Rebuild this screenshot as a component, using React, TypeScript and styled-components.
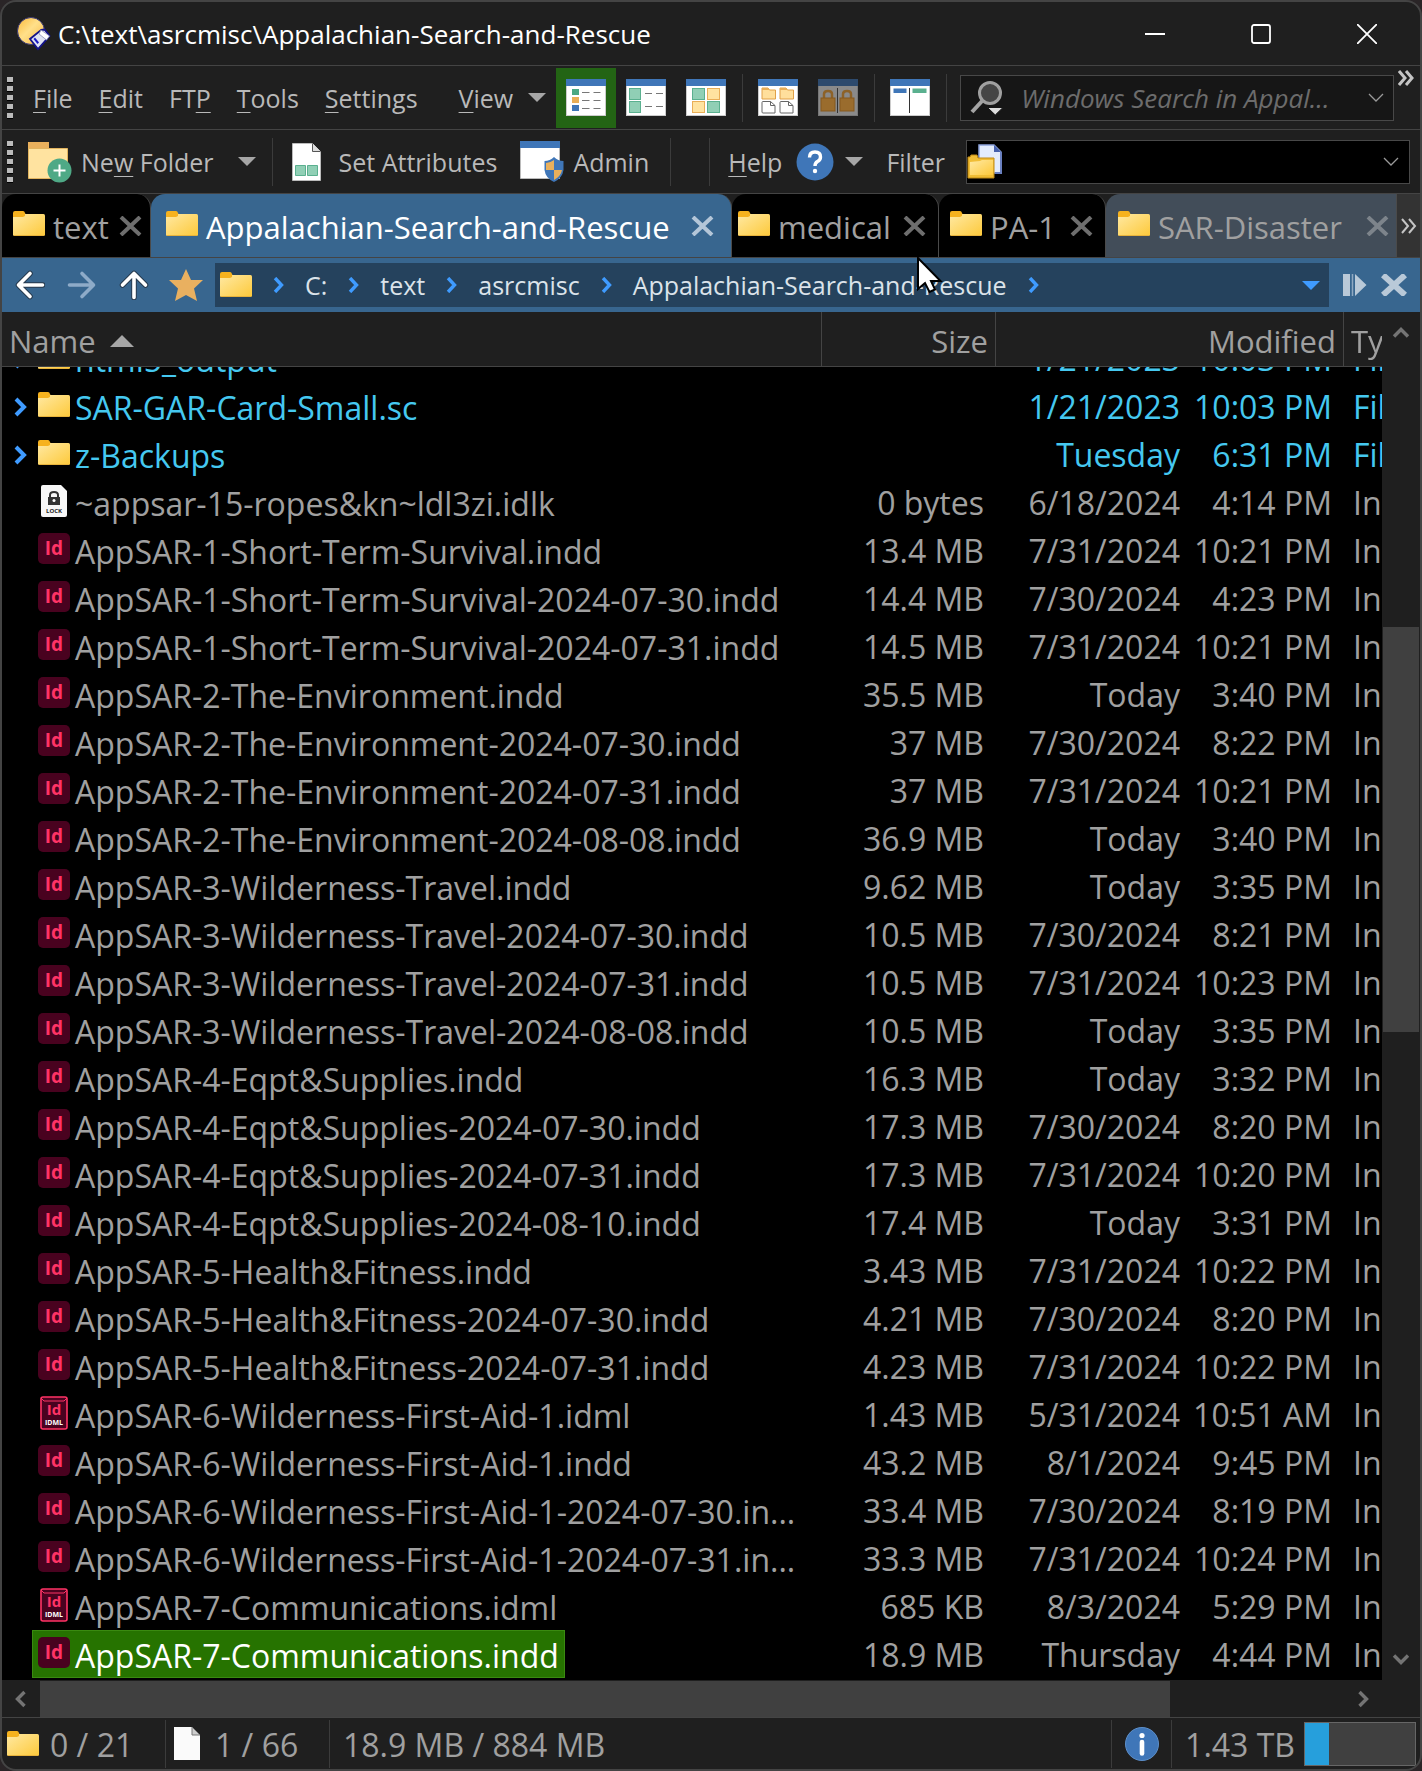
import React, { useLayoutEffect, useRef } from "react";
import styled, { createGlobalStyle, css } from "styled-components";

const color = {
  chrome: "#1f1f1f",
  line: "#444444",
  text: "#a0a0a0",
  menu: "#b9b9b9",
  accent: "#38668f",
  accentDark: "#25425d",
  folder: "#45c8f0",
  blue: "#3f9bff",
  green: "#267300",
};

const Global = createGlobalStyle`
  * { box-sizing: border-box; }
  body { margin: 0; background: #2a2527; font-family: "Open Sans", "Noto Sans", sans-serif; }
  button, input { font: inherit; color: inherit; }
  button { padding: 0; border: 0; background: none; cursor: default; white-space: nowrap; }
  svg { display: block; flex: none; }
`;

const Window = styled.div`
  position: relative;
  display: flex;
  flex-direction: column;
  height: 100vh;
  min-width: 1200px;
  overflow: hidden;
  border: 2px solid ${color.line};
  border-radius: 16px;
  background: ${color.chrome};
  color: ${color.text};
  font-size: 32px;
`;

const TitleBar = styled.header`
  display: flex;
  align-items: center;
  height: 63px;
  padding-left: 14px;
  gap: 7px;
  color: #fff;
`;

const Title = styled.h1`
  flex: 1;
  margin: 0;
  font-size: 26px;
  font-weight: 400;
  line-height: 34px;
`;

const WindowButton = styled.button`
  display: grid;
  place-items: center;
  width: 106px;
  height: 60px;
`;

const WindowButtons = styled.div`
  display: flex;
`;

const ToolRow = styled.div`
  display: flex;
  align-items: center;
  height: 64px;
  padding-left: 5px;
  border-top: 1px solid ${color.line};
  color: ${color.menu};
  font-size: 25px;
  line-height: 34px;
  white-space: nowrap;
`;

const Grip = styled.span`
  flex: none;
  width: 6px;
  height: 42px;
  background: repeating-linear-gradient(#bbb 0 5px, #000 5px 6px, transparent 6px 9px);
`;

const MenuList = styled.nav`
  display: flex;
  gap: 26px;
  padding-left: 20px;
`;

const MenuButton = styled.button`
  u { text-underline-offset: 4px; text-decoration-thickness: 1px; }
`;

const ViewGroup = styled.div`
  display: flex;
  align-items: center;
  gap: 15px;
  margin: 0 10px 0 41px;
`;

const ViewButton = styled.button<{ $active?: boolean }>`
  display: grid;
  place-items: center;
  width: 60px;
  height: 60px;
  background: ${(p) => (p.$active ? "#236414" : "none")};
`;

const Separator = styled.span<{ $before?: number; $after?: number }>`
  flex: none;
  width: 1px;
  height: 48px;
  margin: 0 ${(p) => p.$after ?? 5}px 0 ${(p) => p.$before ?? 6}px;
  background: #3b3b3b;
`;

const Combo = styled.div<{ $dark?: boolean }>`
  display: flex;
  flex: 1;
  align-items: center;
  min-width: 0;
  height: ${(p) => (p.$dark ? 44 : 46)}px;
  padding-right: ${(p) => (p.$dark ? 10 : 9)}px;
  border: 1px solid #484848;
  background: ${(p) => (p.$dark ? "#000" : "#161616")};
`;

const ComboInput = styled.input`
  flex: 1;
  min-width: 0;
  padding: 0 17px;
  border: 0;
  outline: 0;
  background: transparent;
  &::placeholder { color: #6c6c6c; font-size: 26px; font-style: italic; opacity: 1; }
`;

const Overflow = styled.button`
  align-self: flex-start;
  width: 26px;
  padding: 4px 0 0 4px;
`;

const ToolButton = styled.button<{ $gap: number }>`
  display: flex;
  align-items: center;
  gap: ${(p) => p.$gap}px;
  u { text-underline-offset: 4px; text-decoration-thickness: 1px; }
`;

const ToolGroup = styled.div<{ $gap: number; $lead: number }>`
  display: flex;
  align-items: center;
  gap: ${(p) => p.$gap}px;
  padding-left: ${(p) => p.$lead}px;
`;

const FilterField = styled.div`
  display: flex;
  flex: 1;
  align-items: center;
  gap: 21px;
  padding: 0 10px 0 23px;
`;

const Tabs = styled.div`
  display: flex;
  height: 65px;
  border-top: 1px solid ${color.line};
  border-bottom: 1px solid ${color.line};
  font-size: 31px;
`;

type Tone = "plain" | "current" | "hover";

const Tab = styled.div<{ $width?: number; $lead: number; $trail: number; $tone: Tone }>`
  display: flex;
  flex: ${(p) => (p.$width ? `none` : `1`)};
  align-items: center;
  width: ${(p) => (p.$width ? `${p.$width}px` : "auto")};
  padding: 0 ${(p) => p.$trail}px 0 ${(p) => p.$lead}px;
  border-right: 1px solid #4a4a4a;
  border-radius: ${(p) => (p.$tone === "hover" ? "14px 0 0 0" : "14px 14px 0 0")};
  background: ${(p) => (p.$tone === "current" ? color.accent : p.$tone === "hover" ? "#424d59" : "#000")};
  color: ${(p) => (p.$tone === "current" ? "#fff" : color.text)};
`;

const TabLabel = styled.button`
  display: flex;
  flex: 1;
  align-items: center;
  gap: 8px;
  height: 100%;
  svg { margin-bottom: 3px; }
  span { padding-top: 3px; line-height: 44px; }
`;

const TabClose = styled.button<{ $tone: Tone }>`
  color: ${(p) => (p.$tone === "current" ? "#b4c6d8" : p.$tone === "hover" ? "#7d848b" : "#6e6e6e")};
`;

const TabsMore = styled.button`
  display: grid;
  place-items: center;
  width: 23px;
  background: #333;
`;

const PathBar = styled.div`
  display: flex;
  align-items: center;
  height: 54px;
  padding: 0 13px 0 2px;
  background: ${color.accent};
  color: #fff;
`;

const NavButton = styled.button`
  display: grid;
  place-items: center;
  width: 52px;
  height: 48px;
`;

const Crumbs = styled.nav`
  display: flex;
  flex: 1;
  align-items: center;
  gap: 21px;
  height: 44px;
  margin: 0 13px 0 3px;
  padding: 0 9px 0 5px;
  background: ${color.accentDark};
  color: #dbe3ea;
  font-size: 25px;
  line-height: 34px;
`;

const Crumb = styled.a`
  color: inherit;
  text-decoration: none;
  white-space: nowrap;
`;

const CrumbMenu = styled.button`
  margin-left: auto;
`;

const PathActions = styled.div`
  display: flex;
  gap: 14px;
  color: #b9c9d8;
`;

const ListArea = styled.main`
  display: flex;
  flex: 1;
  min-height: 0;
`;

const ListScroll = styled.div`
  flex: 1;
  min-width: 0;
  overflow: hidden;
  background: #000;
`;

const Files = styled.table`
  width: 100%;
  table-layout: fixed;
  border-spacing: 0;
  padding-bottom: 2px;
`;

const NameCol = styled.col``;
const SizeCol = styled.col` width: 174px; `;
const DateCol = styled.col` width: 196px; `;
const TimeCol = styled.col` width: 152px; `;
const TypeCol = styled.col` width: 38px; `;

const HeadCell = styled.th<{ $align?: "right" }>`
  position: sticky;
  top: 0;
  z-index: 1;
  height: 55px;
  padding: 7px 7px 3px;
  border-right: 1px solid ${color.line};
  border-bottom: 1px solid ${color.line};
  background: ${color.chrome};
  font-size: 31px;
  font-weight: 400;
  line-height: 44px;
  text-align: ${(p) => p.$align ?? "left"};
  white-space: nowrap;
  &:last-child { border-right: 0; padding-right: 0; }
`;

const SortLabel = styled.button`
  display: flex;
  align-items: center;
  gap: 14px;
`;

const Row = styled.tr<{ $folder: boolean }>`
  color: ${(p) => (p.$folder ? color.folder : color.text)};
`;

const cell = css`
  height: 48px;
  line-height: 44px;
  white-space: nowrap;
`;

const NameCell = styled.td`
  ${cell}
  padding: 0;
  div { display: flex; align-items: center; }
`;

const Expander = styled.button`
  display: grid;
  width: 30px;
  height: 48px;
  padding: 2px 0 0 12px;
  place-items: center start;
  color: ${color.blue};
`;

const FileName = styled.span<{ $selected: boolean }>`
  display: inline-flex;
  align-items: center;
  gap: 5px;
  height: 48px;
  padding: 0 5px;
  border: 1px solid ${(p) => (p.$selected ? "#3a8a10" : "transparent")};
  background: ${(p) => (p.$selected ? color.green : "none")};
  color: ${(p) => (p.$selected ? "#fff" : "inherit")};
  svg { margin-bottom: 2px; }
  b { padding-top: 3px; font-weight: 400; }
`;

const DataCell = styled.td<{ $left?: boolean }>`
  ${cell}
  overflow: hidden;
  padding: 3px ${(p) => (p.$left ? 0 : 12)}px 1px ${(p) => (p.$left ? 9 : 0)}px;
  text-align: ${(p) => (p.$left ? "left" : "right")};
  text-overflow: clip;
`;

const VScroll = styled.div`
  display: flex;
  flex-direction: column;
  align-items: center;
  width: 38px;
  padding: 12px 0;
  color: #747474;
`;

const VTrack = styled.div`
  flex: 1;
  width: 36px;
`;

const VThumb = styled.div`
  height: 31%;
  margin-top: 285px;
  background: #404040;
`;

const HScroll = styled.div`
  display: flex;
  align-items: center;
  height: 38px;
  padding-right: 48px;
  border-bottom: 1px solid ${color.line};
  color: #747474;
`;

const HButton = styled.button`
  display: grid;
  place-items: center;
  width: 38px;
`;

const HTrack = styled.div`
  flex: 1;
  height: 36px;
`;

const HThumb = styled.div`
  width: 86%;
  height: 100%;
  background: #404040;
`;

const StatusBar = styled.footer`
  display: flex;
  align-items: center;
  height: 51px;
  padding: 0 4px 0 5px;
  line-height: 44px;
  white-space: nowrap;
`;

const StatusItem = styled.span<{ $gap?: number; $width?: number }>`
  display: flex;
  align-items: center;
  gap: ${(p) => p.$gap ?? 11}px;
  width: ${(p) => (p.$width ? `${p.$width}px` : "auto")};
  span { padding-top: 3px; }
`;

const Spacer = styled.span`
  flex: 1;
`;

const DiskUsage = styled.div`
  width: 112px;
  height: 44px;
  margin-left: 9px;
  border: 1px solid #666;
  background: #404040;
`;

const DiskUsed = styled.div`
  width: 22%;
  height: 100%;
  background: #269fdc;
`;

const Pointer = styled.svg`
  position: absolute;
  top: 254px;
  left: 913px;
  pointer-events: none;
`;

const FolderIcon = () => (
  <svg width="32" height="26" viewBox="0 0 32 26" aria-hidden="true">
    <path d="M0 2q0-2 2-2h8q1.500 0 2 2l1 2v4H0z" fill="#f6b21e" />
    <rect x="0" y="3" width="32" height="22" rx="1.500" fill="url(#folderFill)" />
    <path d="M0 3h12v2l-2 1H0z" fill="#f6b21e" />
    <path d="M1 24.5h30" stroke="#e8b33c" />
  </svg>
);

const Defs = () => (
  <svg width="0" height="0" style={{ position: "absolute" }} aria-hidden="true">
    <defs>
      <linearGradient id="folderFill" x1="0" y1="0" x2="1" y2="1">
        <stop offset="0" stopColor="#ffe9a3" />
        <stop offset="1" stopColor="#fdc93a" />
      </linearGradient>
      <linearGradient id="ballFill" x1="0" y1="0" x2="1" y2="1">
        <stop offset="0" stopColor="#fbb93a" />
        <stop offset="0.45" stopColor="#ffe08a" />
        <stop offset="1" stopColor="#f7b640" />
      </linearGradient>
    </defs>
  </svg>
);

const Down = ({ fill = "#a6a6a6" }: { fill?: string }) => (
  <svg width="18" height="9" viewBox="0 0 18 9" aria-hidden="true">
    <path d="M0 0h18L9 9z" fill={fill} />
  </svg>
);

const ThinChevron = () => (
  <svg width="16" height="9" viewBox="0 0 16 9" aria-hidden="true">
    <path d="M1 1l7 7 7-7" fill="none" stroke="#9a9a9a" strokeWidth="1.300" />
  </svg>
);

const Chevron = ({ dir }: { dir: "up" | "down" | "left" | "right" }) => {
  const turn = { right: 0, down: 90, left: 180, up: 270 }[dir];
  return (
    <svg width="18" height="18" viewBox="0 0 18 18" aria-hidden="true">
      <path d="M5.500 2l7 7-7 7" transform={`rotate(${turn} 9 9)`} fill="none" stroke="currentColor" strokeWidth="3.400" />
    </svg>
  );
};

const CrumbChevron = () => (
  <svg width="11" height="16" viewBox="0 0 11 16" aria-hidden="true">
    <path d="M2 1l6.500 7L2 15" fill="none" stroke={color.blue} strokeWidth="3.400" />
  </svg>
);

const Cross = ({ w, h, s }: { w: number; h: number; s: number }) => (
  <svg width={w} height={h} viewBox={`0 0 ${w} ${h}`} aria-hidden="true">
    <path d={`M2 1L${w - 2} ${h - 1}M${w - 2} 1L2 ${h - 1}`} stroke="currentColor" strokeWidth={s} />
  </svg>
);

const DoubleChevron = ({ weight = 2 }: { weight?: number }) => (
  <svg width="16" height="16" viewBox="0 0 16 16" aria-hidden="true">
    <path d="M1 1l6 7-6 7M8 1l6 7-6 7" fill="none" stroke="#c4c4c4" strokeWidth={weight} />
  </svg>
);

const Pane = ({ children, dim }: { children: React.ReactNode; dim?: boolean }) => (
  <svg width="40" height="38" viewBox="0 0 40 38" aria-hidden="true">
    <rect x="0.500" y="0.500" width="39" height="36" fill={dim ? "#8a8a8a" : "#fff"} stroke={dim ? "#777" : "#ccc"} />
    <rect width="40" height="7" fill={dim ? "#2d4a6d" : "#3f76b8"} />
    {children}
  </svg>
);

const DetailsIcon = () => (
  <Pane>
    {["#4aa883", "#e9ae57", "#3f76b8"].map((c, i) => (
      <g key={c}>
        <rect x="6" y={10 + i * 8} width="7" height="6" fill={c} />
        <path d={`M16 ${13.5 + i * 8}h7.500m4 0h7`} stroke="#777" />
      </g>
    ))}
  </Pane>
);

const TilesIcon = () => (
  <Pane>
    {[9.5, 22.5].map((y) => (
      <g key={y}>
        <rect x="3.500" y={y} width="11" height="11" fill="#90cfb5" stroke="#5ab08f" />
        <path d={`M19 ${y + 5}h7m4 0h7`} stroke="#777" />
      </g>
    ))}
  </Pane>
);

const ThumbsIcon = () => (
  <Pane>
    <rect x="6.500" y="9.500" width="12" height="11" fill="#90cfb5" stroke="#5ab08f" />
    <rect x="21.500" y="9.500" width="12" height="11" fill="#ffe3a0" stroke="#e9ae57" />
    <rect x="6.500" y="22.500" width="12" height="11" fill="#ffe3a0" stroke="#e9ae57" />
    <rect x="21.500" y="22.500" width="12" height="11" fill="#90cfb5" stroke="#5ab08f" />
  </Pane>
);

const MixedIcon = () => (
  <Pane>
    {[4, 22].map((x) => (
      <g key={x}>
        <path d={`M${x} 9h6l1.500 2h6v9h-13.500z`} fill="#ffdf9c" stroke="#e0a048" />
        <path d={`M${x} 9h6l1.500 2h-7.500z`} fill="#e9ae57" />
        <path d={`M${x + 1} 22.500h7.500l4.500 4v7.500h-12q-1 0-1-1v-9.500q0-1 1-1zM${x + 8.5} 22.500v4h4.500`} fill="#fff" stroke="#666" />
      </g>
    ))}
  </Pane>
);

const LockedPanesIcon = () => (
  <Pane dim>
    <path d="M19.500 9v25" stroke="#333" />
    {[3, 22].map((x) => (
      <g key={x}>
        <path d={`M${x + 3} 19v-4q0-3 4-3t4 3v4`} fill="none" stroke="#8d6228" strokeWidth="2.500" />
        <rect x={x} y="19" width="14" height="13" fill="#9a6c2d" stroke="#85591f" />
      </g>
    ))}
  </Pane>
);

const DualIcon = () => (
  <Pane>
    <path d="M19.500 9v25" stroke="#333" />
    <rect x="3.500" y="9.500" width="13" height="4.500" fill="#3f76b8" />
    <rect x="22.500" y="9.500" width="14" height="4.500" fill="#5ab08f" />
  </Pane>
);

const AppIcon = () => (
  <svg width="35" height="36" viewBox="0 0 35 36" aria-hidden="true">
    <circle cx="15" cy="15" r="13.500" fill="url(#ballFill)" stroke="#3a3a78" />
    <path d="M25 14l3.500-.5 5 6.500-11.500 13-8-10z" fill="#dfe3f2" stroke="#14148a" strokeWidth="1.800" />
    <path d="M25 14l8.500 6-3 4-7.500-6z" fill="#fff" stroke="#8c90b8" strokeWidth="0.800" />
    <path d="M19 21.500l4 5-1.500 1.500-4-5z" fill="#1b1bc4" />
  </svg>
);

const SearchIcon = () => (
  <svg width="34" height="36" viewBox="0 0 34 36" aria-hidden="true">
    <path d="M13 20L2 32" stroke="#a4a4a4" strokeWidth="4" />
    <circle cx="20" cy="13" r="10.500" fill="#454545" stroke="#a0a0a0" strokeWidth="3" />
    <path d="M17.500 27.500h15.500l-7.750 7.500z" fill="#ddd" stroke="#161616" />
  </svg>
);

const NewFolderIcon = () => (
  <svg width="44" height="42" viewBox="0 0 44 42" aria-hidden="true">
    <path d="M0 1h21v7H0z" fill="#e9b05c" />
    <path d="M.5 7.500h39v30H.5z" fill="#ffe3a0" stroke="#e2b45f" />
    <circle cx="31.500" cy="29.500" r="12" fill="#4fa986" />
    <path d="M31.500 23.500v12M25.500 29.500h12" stroke="#fff" strokeWidth="2" />
  </svg>
);

const AttributesIcon = () => (
  <svg width="29" height="38" viewBox="0 0 29 38" aria-hidden="true">
    <path d="M.5.5h20l8 8v29H.5z" fill="#fff" stroke="#bbb" />
    <path d="M20.500.5v8h8" fill="#ddd" stroke="#555" />
    <path d="M3.500 22.500h10v10h-10zM15.500 22.500h10v10h-10z" fill="#90cfb5" stroke="#5ab08f" />
  </svg>
);

const AdminIcon = () => (
  <svg width="44" height="42" viewBox="0 0 44 42" aria-hidden="true">
    <path d="M.5.5h39v37H.5z" fill="#fff" stroke="#bbb" />
    <path d="M0 0h40v7H0z" fill="#3f76b8" />
    <path d="M34 16q4 4 9.500 4v9q-1 8-9.500 12-8.500-4-9.500-12v-9q5.500 0 9.500-4z" fill="#3f76b8" />
    <path d="M34 19v10h-8v-7q4 0 8-3zM34 29h8q-1 6-8 10z" fill="#e9b05c" />
  </svg>
);

const BadgeText = styled.text`
  font-family: "Open Sans", sans-serif;
  font-weight: 700;
  text-anchor: middle;
`;

const HelpIcon = () => (
  <svg width="38" height="38" viewBox="0 0 38 38" aria-hidden="true">
    <circle cx="19" cy="19" r="18.500" fill="#3f76b8" />
    <path d="M13.500 14.500q0-5.500 5.500-5.500t5.500 5q0 3-3 4.500-2.500 1.500-2.500 4.500" fill="none" stroke="#fff" strokeWidth="3.400" />
    <circle cx="19" cy="28" r="2.200" fill="#fff" />
  </svg>
);

const InfoIcon = () => (
  <svg width="34" height="34" viewBox="0 0 34 34" aria-hidden="true">
    <circle cx="17" cy="17" r="16.500" fill="#3f76b8" stroke="#5d8fc9" />
    <circle cx="17" cy="8.500" r="2.600" fill="#fff" />
    <path d="M17 15v11.500" stroke="#fff" strokeWidth="4.600" strokeLinecap="round" />
  </svg>
);

const FilterIcon = () => (
  <svg width="36" height="36" viewBox="0 0 36 36" aria-hidden="true">
    <path d="M12 1h15l7 7v21H12z" fill="#e3ecfc" stroke="#8ea4dc" strokeWidth="1.500" />
    <path d="M27 1v7h7z" fill="#4560ac" />
    <path d="M34 8v21h-6" fill="none" stroke="#6a80c0" strokeWidth="2" />
    <path d="M1 13h2l1-2h6l1 3h16v20H1z" fill="#f0bd35" stroke="#c08a14" />
    <path d="M3 18l10-1 2-1h11v15H3z" fill="url(#folderFill)" />
  </svg>
);

const Arrow = ({ dir }: { dir: "left" | "right" | "up" }) => (
  <svg width="30" height="30" viewBox="0 0 30 30" aria-hidden="true">
    <g
      transform={`rotate(${{ left: 0, right: 180, up: 90 }[dir]} 15 15)`}
      fill="none"
      strokeLinecap="round"
      strokeLinejoin="round"
    >
      <path d="M15 3.500L3.500 15 15 26.500M4 15h23.500" stroke="#26394c" strokeWidth={dir === "right" ? 0 : 5.5} />
      <path d="M15 3.500L3.500 15 15 26.500M4 15h23.500" stroke={dir === "right" ? "#8eabc8" : "#fff"} strokeWidth="3.600" />
    </g>
  </svg>
);

const StarIcon = () => (
  <svg width="34" height="34" viewBox="0 0 34 34" aria-hidden="true">
    <path d="M17 1l5 11h12l-9 8.500 3 12.500-11-6-11 6 3-12.500L0 12h12z" fill="#e9b060" />
  </svg>
);

const SplitIcon = () => (
  <svg width="25" height="24" viewBox="0 0 25 24" aria-hidden="true">
    <path d="M1 1h7v22H1zM13 1l11.500 11L13 23z" fill="currentColor" />
    <path d="M10.500 1v22" stroke="#8fa9c2" strokeWidth="1.500" />
  </svg>
);

const InddIcon = () => (
  <svg width="32" height="32" viewBox="0 0 32 32" role="img" aria-label="InDesign document">
    <rect width="32" height="31" rx="5" fill="#49021f" />
    <BadgeText x="16" y="22" fontSize="19" fill="#ff3366">Id</BadgeText>
  </svg>
);

const IdmlIcon = () => (
  <svg width="32" height="34" viewBox="0 0 32 34" role="img" aria-label="InDesign markup">
    <rect x="3" y="1" width="26" height="32" rx="2" fill="#49021f" stroke="#ff3366" strokeWidth="1.600" />
    <path d="M3 2l3 3h20l3-3" fill="none" stroke="#ff3366" />
    <BadgeText x="16" y="19" fontSize="15" fill="#ff3366">Id</BadgeText>
    <BadgeText x="16" y="29" fontSize="7" fill="#fff">IDML</BadgeText>
  </svg>
);

const LockIcon = () => (
  <svg width="32" height="34" viewBox="0 0 32 34" role="img" aria-label="Lock file">
    <path d="M5 1h18l6 6v24q0 2-2 2H5q-2 0-2-2V3q0-2 2-2z" fill="#f7f7f7" />
    <path d="M12 13v-2q0-3 4-3t4 3v2" fill="none" stroke="#333" strokeWidth="2" />
    <rect x="10" y="13" width="12" height="8" fill="#333" />
    <circle cx="16" cy="16.500" r="1.500" fill="#fff" />
    <BadgeText x="16" y="29" fontSize="6" fill="#222">LOCK</BadgeText>
  </svg>
);

const PageIcon = () => (
  <svg width="26" height="33" viewBox="0 0 26 33" aria-hidden="true">
    <path d="M0 0h18l8 8v25H0z" fill="#fafafa" />
    <path d="M18 0v8h8z" fill="#ccc" stroke="#777" />
  </svg>
);

type Kind = "folder" | "lock" | "indd" | "idml";
type Entry = [Kind, string, string, string, string];

const entries: Entry[] = [
  ["folder", "html5_output", "", "1/21/2023", "10:03 PM"],
  ["folder", "SAR-GAR-Card-Small.sc", "", "1/21/2023", "10:03 PM"],
  ["folder", "z-Backups", "", "Tuesday", "6:31 PM"],
  ["lock", "~appsar-15-ropes&kn~ldl3zi.idlk", "0 bytes", "6/18/2024", "4:14 PM"],
  ["indd", "AppSAR-1-Short-Term-Survival.indd", "13.4 MB", "7/31/2024", "10:21 PM"],
  ["indd", "AppSAR-1-Short-Term-Survival-2024-07-30.indd", "14.4 MB", "7/30/2024", "4:23 PM"],
  ["indd", "AppSAR-1-Short-Term-Survival-2024-07-31.indd", "14.5 MB", "7/31/2024", "10:21 PM"],
  ["indd", "AppSAR-2-The-Environment.indd", "35.5 MB", "Today", "3:40 PM"],
  ["indd", "AppSAR-2-The-Environment-2024-07-30.indd", "37 MB", "7/30/2024", "8:22 PM"],
  ["indd", "AppSAR-2-The-Environment-2024-07-31.indd", "37 MB", "7/31/2024", "10:21 PM"],
  ["indd", "AppSAR-2-The-Environment-2024-08-08.indd", "36.9 MB", "Today", "3:40 PM"],
  ["indd", "AppSAR-3-Wilderness-Travel.indd", "9.62 MB", "Today", "3:35 PM"],
  ["indd", "AppSAR-3-Wilderness-Travel-2024-07-30.indd", "10.5 MB", "7/30/2024", "8:21 PM"],
  ["indd", "AppSAR-3-Wilderness-Travel-2024-07-31.indd", "10.5 MB", "7/31/2024", "10:23 PM"],
  ["indd", "AppSAR-3-Wilderness-Travel-2024-08-08.indd", "10.5 MB", "Today", "3:35 PM"],
  ["indd", "AppSAR-4-Eqpt&Supplies.indd", "16.3 MB", "Today", "3:32 PM"],
  ["indd", "AppSAR-4-Eqpt&Supplies-2024-07-30.indd", "17.3 MB", "7/30/2024", "8:20 PM"],
  ["indd", "AppSAR-4-Eqpt&Supplies-2024-07-31.indd", "17.3 MB", "7/31/2024", "10:20 PM"],
  ["indd", "AppSAR-4-Eqpt&Supplies-2024-08-10.indd", "17.4 MB", "Today", "3:31 PM"],
  ["indd", "AppSAR-5-Health&Fitness.indd", "3.43 MB", "7/31/2024", "10:22 PM"],
  ["indd", "AppSAR-5-Health&Fitness-2024-07-30.indd", "4.21 MB", "7/30/2024", "8:20 PM"],
  ["indd", "AppSAR-5-Health&Fitness-2024-07-31.indd", "4.23 MB", "7/31/2024", "10:22 PM"],
  ["idml", "AppSAR-6-Wilderness-First-Aid-1.idml", "1.43 MB", "5/31/2024", "10:51 AM"],
  ["indd", "AppSAR-6-Wilderness-First-Aid-1.indd", "43.2 MB", "8/1/2024", "9:45 PM"],
  ["indd", "AppSAR-6-Wilderness-First-Aid-1-2024-07-30.in...", "33.4 MB", "7/30/2024", "8:19 PM"],
  ["indd", "AppSAR-6-Wilderness-First-Aid-1-2024-07-31.in...", "33.3 MB", "7/31/2024", "10:24 PM"],
  ["idml", "AppSAR-7-Communications.idml", "685 KB", "8/3/2024", "5:29 PM"],
  ["indd", "AppSAR-7-Communications.indd", "18.9 MB", "Thursday", "4:44 PM"],
];

const icons: Record<Kind, () => React.JSX.Element> = {
  folder: FolderIcon,
  lock: LockIcon,
  indd: InddIcon,
  idml: IdmlIcon,
};

const tabs: { name: string; width?: number; lead: number; trail: number; tone: Tone }[] = [
  { name: "text", width: 149, lead: 11, trail: 8, tone: "plain" },
  { name: "Appalachian-Search-and-Rescue", width: 581, lead: 15, trail: 17, tone: "current" },
  { name: "medical", width: 207, lead: 6, trail: 12, tone: "plain" },
  { name: "PA-1", width: 167, lead: 11, trail: 12, tone: "plain" },
  { name: "SAR-Disaster", lead: 12, trail: 7, tone: "hover" },
];

const crumbs = ["C:", "text", "asrcmisc", "Appalachian-Search-and-Rescue"];

export default function App() {
  const list = useRef<HTMLDivElement>(null);

  // Open the listing with the selection, the last entry, in view.
  useLayoutEffect(() => {
    if (list.current) list.current.scrollTop = list.current.scrollHeight;
  }, []);

  return (
    <Window>
      <Global />
      <Defs />
      <TitleBar>
        <AppIcon />
        <Title>C:\text\asrcmisc\Appalachian-Search-and-Rescue</Title>
        <WindowButtons>
          <WindowButton aria-label="Minimize">
            <svg width="20" height="20" viewBox="0 0 20 20"><path d="M0 10h20" stroke="#fff" strokeWidth="2" /></svg>
          </WindowButton>
          <WindowButton aria-label="Maximize">
            <svg width="20" height="20" viewBox="0 0 20 20"><rect x="1" y="1" width="18" height="18" rx="2" fill="none" stroke="#fff" strokeWidth="1.800" /></svg>
          </WindowButton>
          <WindowButton aria-label="Close">
            <svg width="20" height="20" viewBox="0 0 20 20"><path d="M0 0l20 20M20 0L0 20" stroke="#fff" strokeWidth="1.800" /></svg>
          </WindowButton>
        </WindowButtons>
      </TitleBar>

      <ToolRow>
        <Grip />
        <MenuList>
          <MenuButton><u>F</u>ile</MenuButton>
          <MenuButton><u>E</u>dit</MenuButton>
          <MenuButton>FT<u>P</u></MenuButton>
          <MenuButton><u>T</u>ools</MenuButton>
          <MenuButton><u>S</u>ettings</MenuButton>
        </MenuList>
        <ViewGroup>
          <MenuButton><u>V</u>iew</MenuButton>
          <Down />
        </ViewGroup>
        <ViewButton $active aria-label="Details"><DetailsIcon /></ViewButton>
        <ViewButton aria-label="Tiles"><TilesIcon /></ViewButton>
        <ViewButton aria-label="Thumbnails"><ThumbsIcon /></ViewButton>
        <Separator />
        <ViewButton aria-label="Mixed mode"><MixedIcon /></ViewButton>
        <ViewButton aria-label="Lock folders" disabled><LockedPanesIcon /></ViewButton>
        <Separator />
        <ViewButton aria-label="Dual display"><DualIcon /></ViewButton>
        <Separator $after={13} />
        <Combo>
          <ToolGroup $gap={0} $lead={9}><SearchIcon /></ToolGroup>
          <ComboInput aria-label="Windows Search" placeholder="Windows Search in Appal..." />
          <ThinChevron />
        </Combo>
        <Overflow aria-label="More tools"><DoubleChevron weight={3} /></Overflow>
      </ToolRow>

      <ToolRow>
        <Grip />
        <ToolGroup $gap={24} $lead={15}>
          <ToolButton $gap={9}><NewFolderIcon /><span>Ne<u>w</u> Folder</span></ToolButton>
          <Down />
        </ToolGroup>
        <Separator $before={16} $after={19} />
        <ToolGroup $gap={23} $lead={0}>
          <ToolButton $gap={18}><AttributesIcon />Set Attributes</ToolButton>
          <ToolButton $gap={9}><AdminIcon />Admin</ToolButton>
        </ToolGroup>
        <Separator $before={21} $after={19} />
        <Separator $before={19} $after={18} />
        <ToolGroup $gap={11} $lead={0}>
          <ToolButton $gap={14}><span><u>H</u>elp</span><HelpIcon /></ToolButton>
          <Down />
        </ToolGroup>
        <FilterField>
          <label htmlFor="filter">Filter</label>
          <Combo $dark>
            <FilterIcon />
            <ComboInput id="filter" />
            <ThinChevron />
          </Combo>
        </FilterField>
      </ToolRow>

      <Tabs>
        {tabs.map((t) => (
          <Tab key={t.name} $width={t.width} $lead={t.lead} $trail={t.trail} $tone={t.tone}>
            <TabLabel><FolderIcon /><span>{t.name}</span></TabLabel>
            <TabClose $tone={t.tone} aria-label={`Close ${t.name}`}><Cross w={23} h={20} s={4} /></TabClose>
          </Tab>
        ))}
        <TabsMore aria-label="More tabs"><DoubleChevron /></TabsMore>
      </Tabs>

      <PathBar>
        <NavButton aria-label="Back"><Arrow dir="left" /></NavButton>
        <NavButton aria-label="Forward"><Arrow dir="right" /></NavButton>
        <NavButton aria-label="Up"><Arrow dir="up" /></NavButton>
        <NavButton aria-label="Favorites"><StarIcon /></NavButton>
        <Crumbs aria-label="Location">
          <FolderIcon />
          <CrumbChevron />
          {crumbs.map((c) => (
            <React.Fragment key={c}>
              <Crumb href="#">{c}</Crumb>
              <CrumbChevron />
            </React.Fragment>
          ))}
          <CrumbMenu aria-label="Recent locations"><Down fill={color.blue} /></CrumbMenu>
        </Crumbs>
        <PathActions>
          <button aria-label="Split"><SplitIcon /></button>
          <button aria-label="Close lister"><Cross w={26} h={22} s={6} /></button>
        </PathActions>
      </PathBar>

      <ListArea>
        <ListScroll ref={list}>
          <Files>
            <colgroup>
              <NameCol />
              <SizeCol />
              <DateCol />
              <TimeCol />
              <TypeCol />
            </colgroup>
            <thead>
              <tr>
                <HeadCell>
                  <SortLabel>
                    Name
                    <svg width="24" height="12" viewBox="0 0 24 12"><path d="M0 12h24L12 0z" fill="#a6a6a6" /></svg>
                  </SortLabel>
                </HeadCell>
                <HeadCell $align="right">Size</HeadCell>
                <HeadCell $align="right" colSpan={2}>Modified</HeadCell>
                <HeadCell>Ty</HeadCell>
              </tr>
            </thead>
            <tbody>
              {entries.map(([kind, name, size, date, time], i) => {
                const Icon = icons[kind];
                const folder = kind === "folder";
                return (
                  <Row key={name} $folder={folder}>
                    <NameCell>
                      <div>
                        <Expander as={folder ? "button" : "span"} aria-label={folder ? `Expand ${name}` : undefined}>
                          {folder && (
                            <svg width="14" height="20" viewBox="0 0 14 20"><path d="M2 2l8 8-8 8" fill="none" stroke="currentColor" strokeWidth="4" /></svg>
                          )}
                        </Expander>
                        <FileName $selected={i === entries.length - 1}><Icon /><b>{name}</b></FileName>
                      </div>
                    </NameCell>
                    <DataCell>{size}</DataCell>
                    <DataCell>{date}</DataCell>
                    <DataCell>{time}</DataCell>
                    <DataCell $left>{folder ? "Fil" : "In"}</DataCell>
                  </Row>
                );
              })}
            </tbody>
          </Files>
        </ListScroll>
        <VScroll>
          <button aria-label="Scroll up"><Chevron dir="up" /></button>
          <VTrack><VThumb /></VTrack>
          <button aria-label="Scroll down"><Chevron dir="down" /></button>
        </VScroll>
      </ListArea>

      <HScroll>
        <HButton aria-label="Scroll left"><Chevron dir="left" /></HButton>
        <HTrack><HThumb /></HTrack>
        <button aria-label="Scroll right"><Chevron dir="right" /></button>
      </HScroll>

      <StatusBar>
        <StatusItem $width={158}><FolderIcon /><span>0 / 21</span></StatusItem>
        <Separator $before={0} $after={8} />
        <StatusItem $width={155} $gap={15}><PageIcon /><span>1 / 66</span></StatusItem>
        <Separator $before={0} $after={13} />
        <StatusItem><span>18.9 MB / 884 MB</span></StatusItem>
        <Spacer />
        <Separator $before={0} $after={13} />
        <button aria-label="Information"><InfoIcon /></button>
        <Separator $before={12} $after={13} />
        <StatusItem><span>1.43 TB</span></StatusItem>
        <DiskUsage role="img" aria-label="Disk usage"><DiskUsed /></DiskUsage>
      </StatusBar>

      <Pointer width="28" height="38" viewBox="0 0 28 38" aria-hidden="true">
        <path d="M3 2v31l7-6 4.500 9 5.500-2.500-4-8.500h9.500z" fill="#fff" stroke="#000" strokeWidth="2" />
      </Pointer>
    </Window>
  );
}
